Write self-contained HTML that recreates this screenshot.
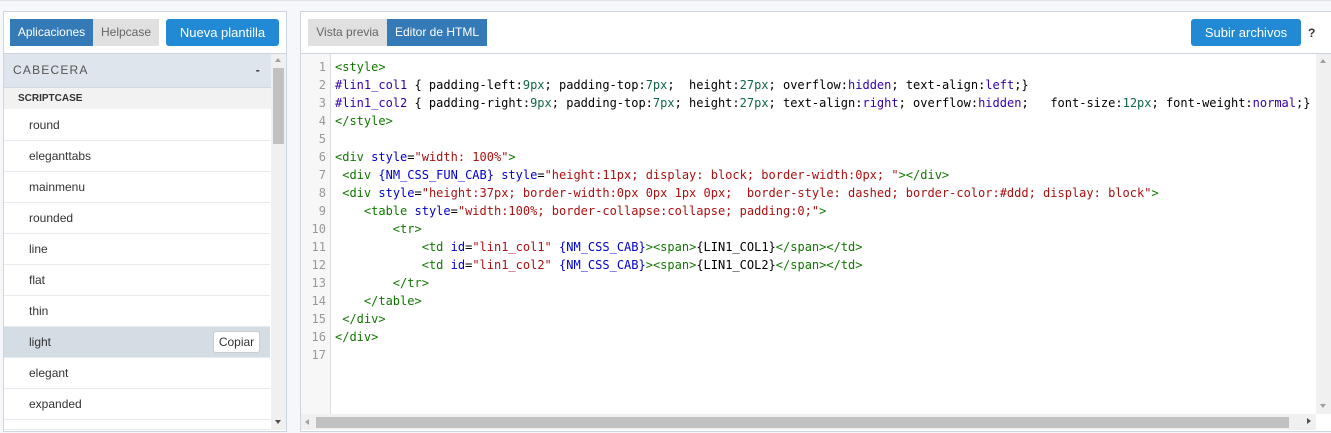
<!DOCTYPE html>
<html><head><meta charset="utf-8"><style>
*{box-sizing:border-box;margin:0;padding:0}
body{width:1331px;height:433px;background:#f5f7fa;font-family:"Liberation Sans",sans-serif;position:relative;overflow:hidden}
.top{position:absolute;left:0;top:0;width:1331px;height:1px;background:#dde3ea}
.panel{position:absolute;background:#fff;border:1px solid #cdd6e0}
.abs{position:absolute}
.tab{position:absolute;top:19px;height:27px;line-height:27px;font-size:12px;text-align:center}
.btn{position:absolute;top:19px;height:27px;line-height:27px;font-size:13px;color:#fff;background:#228ad4;border-radius:3px;text-align:center}
.item{position:absolute;left:4px;width:266px;height:31px;border-bottom:1px solid #e6ebf0;background:#fff;font-size:12px;color:#333;line-height:30px;padding-left:25px}
.code{position:absolute;left:335px;top:58px;font-family:"DejaVu Sans Mono",monospace;font-size:12px;line-height:18px;white-space:pre;color:#000}
.gut{position:absolute;left:301px;top:54px;width:30px;height:360px;background:#f7f7f7;border-right:1px solid #ddd;font-family:"DejaVu Sans Mono",monospace;font-size:12px;line-height:18px;color:#999;text-align:right;padding-right:4px;padding-top:4px;white-space:pre}
.t{color:#170}.a{color:#00c}.s{color:#a11}.n{color:#164}.b{color:#30a}.v{color:#05a}
</style></head><body>
<div class="top"></div>
<div class="panel" style="left:3px;top:11px;width:284px;height:421px"></div>
<div class="tab" style="left:10px;width:83px;background:#337ab7;color:#fff">Aplicaciones</div>
<div class="tab" style="left:93px;width:66px;background:#e0e0e0;color:#666">Helpcase</div>
<div class="btn" style="left:166px;width:113px">Nueva plantilla</div>
<div class="abs" style="left:4px;top:53px;width:282px;height:1px;background:#cdd6e0"></div>
<div class="abs" style="left:4px;top:54px;width:267px;height:34px;background:#dfe5ec;border-bottom:1px solid #d0d8e0;font-size:12px;letter-spacing:1.2px;color:#555;line-height:33px;padding-left:9px">CABECERA<span style="position:absolute;right:10px;font-weight:bold;color:#333">-</span></div>
<div class="abs" style="left:4px;top:88px;width:267px;height:21px;background:#f2f2f2;font-size:10px;font-weight:bold;color:#333;line-height:21px;padding-left:14px">SCRIPTCASE</div>
<div class="item" style="top:110px">round</div>
<div class="item" style="top:141px">eleganttabs</div>
<div class="item" style="top:172px">mainmenu</div>
<div class="item" style="top:203px">rounded</div>
<div class="item" style="top:234px">line</div>
<div class="item" style="top:265px">flat</div>
<div class="item" style="top:296px">thin</div>
<div class="item" style="top:327px;background:#d3dde3">light<span style="position:absolute;left:209px;top:4px;width:47px;height:22px;background:#fff;border:1px solid #ccc;border-radius:3px;line-height:20px;text-align:center;color:#333">Copiar</span></div>
<div class="item" style="top:358px">elegant</div>
<div class="item" style="top:389px">expanded</div>
<div class="item" style="top:420px;height:10px"></div>
<div class="abs" style="left:271px;top:54px;width:15px;height:376px;background:#f0f0f0"></div>
<div class="abs" style="left:273px;top:68px;width:11px;height:76px;background:#c1c1c1"></div>
<div class="abs" style="left:275px;top:58px;border:3.5px solid transparent;border-bottom:4px solid #a0a0a0;border-top:0"></div>
<div class="abs" style="left:275px;top:420px;border:3.5px solid transparent;border-top:4px solid #505050;border-bottom:0"></div>

<div class="panel" style="left:300px;top:11px;width:1033px;height:421px"></div>
<div class="tab" style="left:308px;width:79px;background:#e0e0e0;color:#666">Vista previa</div>
<div class="tab" style="left:387px;width:100px;background:#337ab7;color:#fff">Editor de HTML</div>
<div class="btn" style="left:1191px;width:110px">Subir archivos</div>
<div class="abs" style="left:1308px;top:26px;font-size:12px;font-weight:bold;color:#333">?</div>
<div class="abs" style="left:301px;top:53px;width:1030px;height:1px;background:#cdd6e0"></div>
<div class="gut">1
2
3
4
5
6
7
8
9
10
11
12
13
14
15
16
17</div>
<div class="code"><span class="t">&lt;style&gt;</span>
<span class="b">#lin1_col1</span> { padding-left:<span class="n">9px</span>; padding-top:<span class="n">7px</span>;  height:<span class="n">27px</span>; overflow:<span class="b">hidden</span>; text-align:<span class="b">left</span>;}
<span class="b">#lin1_col2</span> { padding-right:<span class="n">9px</span>; padding-top:<span class="n">7px</span>; height:<span class="n">27px</span>; text-align:<span class="b">right</span>; overflow:<span class="b">hidden</span>;   font-size:<span class="n">12px</span>; font-weight:<span class="b">normal</span>;}
<span class="t">&lt;/style&gt;</span>

<span class="t">&lt;div</span> <span class="a">style</span>=<span class="s">"width: 100%"</span><span class="t">&gt;</span>
 <span class="t">&lt;div</span> <span class="a">{NM_CSS_FUN_CAB}</span> <span class="a">style</span>=<span class="s">"height:11px; display: block; border-width:0px; "</span><span class="t">&gt;&lt;/div&gt;</span>
 <span class="t">&lt;div</span> <span class="a">style</span>=<span class="s">"height:37px; border-width:0px 0px 1px 0px;  border-style: dashed; border-color:#ddd; display: block"</span><span class="t">&gt;</span>
    <span class="t">&lt;table</span> <span class="a">style</span>=<span class="s">"width:100%; border-collapse:collapse; padding:0;"</span><span class="t">&gt;</span>
        <span class="t">&lt;tr&gt;</span>
            <span class="t">&lt;td</span> <span class="a">id</span>=<span class="s">"lin1_col1"</span> <span class="a">{NM_CSS_CAB}</span><span class="t">&gt;&lt;span&gt;</span>{LIN1_COL1}<span class="t">&lt;/span&gt;&lt;/td&gt;</span>
            <span class="t">&lt;td</span> <span class="a">id</span>=<span class="s">"lin1_col2"</span> <span class="a">{NM_CSS_CAB}</span><span class="t">&gt;&lt;span&gt;</span>{LIN1_COL2}<span class="t">&lt;/span&gt;&lt;/td&gt;</span>
        <span class="t">&lt;/tr&gt;</span>
    <span class="t">&lt;/table&gt;</span>
 <span class="t">&lt;/div&gt;</span>
<span class="t">&lt;/div&gt;</span>
</div>
<div class="abs" style="left:1316px;top:54px;width:15px;height:360px;background:#f0f0f0"></div>
<div class="abs" style="left:1320px;top:59px;border:3.5px solid transparent;border-bottom:4px solid #a0a0a0;border-top:0"></div>
<div class="abs" style="left:1320px;top:404px;border:3.5px solid transparent;border-top:4px solid #a0a0a0;border-bottom:0"></div>
<div class="abs" style="left:301px;top:414px;width:1015px;height:16px;background:#f0f0f0"></div>
<div class="abs" style="left:316px;top:417px;width:973px;height:11px;background:#c1c1c1"></div>
<div class="abs" style="left:305px;top:419px;border:3px solid transparent;border-right:4px solid #a0a0a0;border-left:0"></div>
<div class="abs" style="left:1307px;top:418px;border:3.5px solid transparent;border-left:4px solid #505050;border-right:0"></div>
</body></html>
